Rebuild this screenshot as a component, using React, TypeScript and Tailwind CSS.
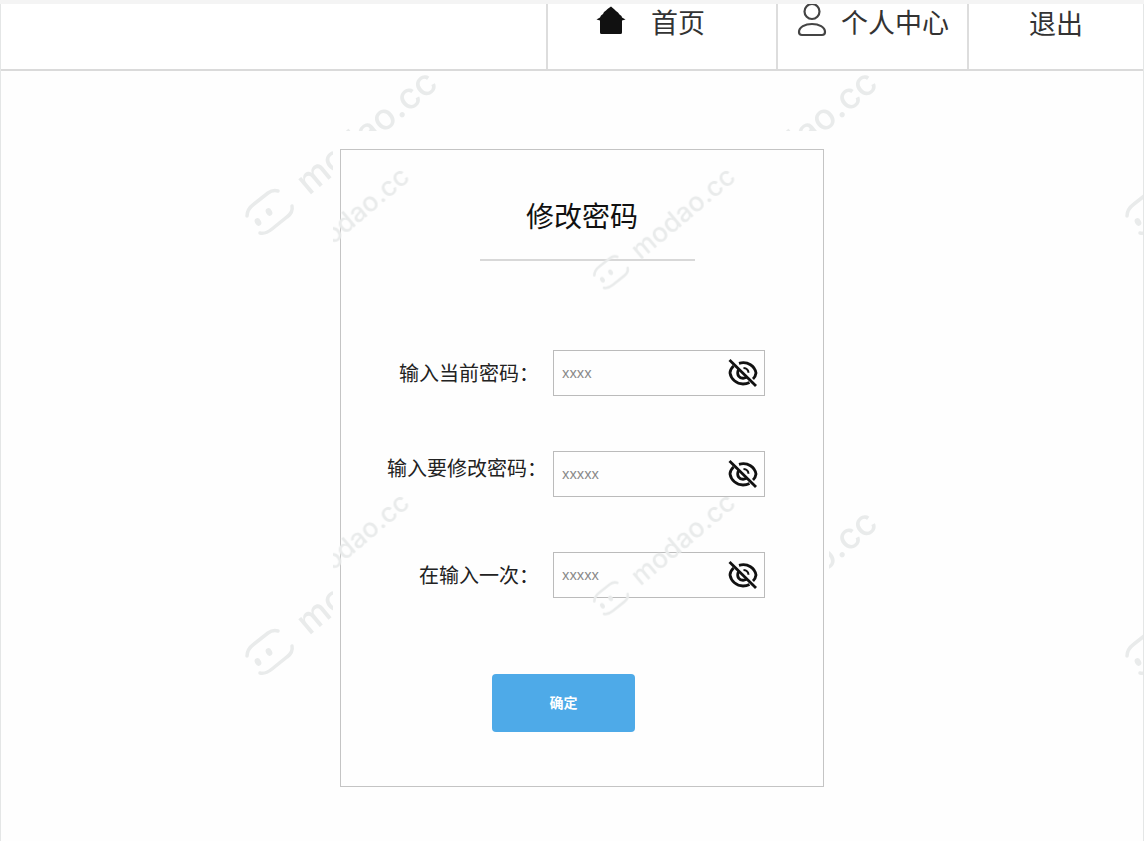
import React, { useState } from 'react'

interface PasswordField {
  id: string
  label: string
  placeholder: string
  /** Alignment of the label inside its row */
  labelClass: string
}

const fields: PasswordField[] = [
  { id: 'current', label: '输入当前密码：', placeholder: 'xxxx', labelClass: 'pr-3.5 leading-[48px]' },
  { id: 'next', label: '输入要修改密码：', placeholder: 'xxxxx', labelClass: 'pr-1.5 leading-9' },
  { id: 'repeat', label: '在输入一次：', placeholder: 'xxxxx', labelClass: 'pr-3.5 leading-[48px]' },
]

const HomeIcon = () => (
  <svg width="30" height="32" viewBox="0 0 30 32" fill="#111111" aria-hidden="true">
    <path d="M15 2.500 L18.500 5.500 L20 7 L22 8.500 L23.500 10.500 L25.500 12 L26 13.500 L29.500 15.500 L26 16.500 L26 28.500 Q26 30 24.500 30 L5.500 30 Q4 30 4 28.500 L4 16.500 L0.500 15.500 L4 13.500 L5 11.500 L7 10 L8 8 L10 6.500 L11.500 5 Z" />
  </svg>
)

const UserIcon = () => (
  <svg width="30" height="34" viewBox="0 0 30 34" fill="none" stroke="#444444" strokeWidth="2.200" aria-hidden="true">
    <circle cx="15" cy="7.500" r="7.500" />
    <path d="M15 20 C8 20 2 23 2 28 Q2 31 5 31 L25 31 Q28 31 28 28 C28 23 22 20 15 20 Z" />
  </svg>
)

const EyeOffIcon = () => (
  <svg width="30" height="30" viewBox="0 0 30 30" fill="none" stroke="#111111" strokeWidth="2.800" aria-hidden="true">
    <path d="M5.500 8 C3 10.500 2 13 2 15 C3 21 8.500 26 15 26 C17.500 26 19.500 25.500 21.500 24.500" />
    <path d="M11 5.300 C20 2.700 27 8.500 28 15 C27.700 17.500 26.500 19.500 25 21" />
    <path d="M10.500 11.500 C8 17 11.500 20.700 16 20.200 C17.500 20 18.500 19.300 19 18.500" />
    <path d="M15.500 10 C18.300 10.200 20.300 12 20.500 14.800" strokeWidth="2" />
    <path d="M1.500 2 L28 28" />
  </svg>
)

interface WatermarkProps {
  id: string
  x: number
  y: number
  scale: number
}

/**
 * Tiled brand mark that covers its nearest positioned parent
 */
const Watermark: React.FC<WatermarkProps> = ({ id, x, y, scale }) => (
  <svg className="pointer-events-none absolute inset-0 h-full w-full" aria-hidden="true">
    <defs>
      <pattern
        id={id}
        width="440"
        height="440"
        patternUnits="userSpaceOnUse"
        patternTransform={`translate(${x} ${y}) scale(${scale})`}
      >
        <g fill="none" stroke="#e9ebeb" strokeWidth="3.500" strokeLinecap="round">
          <path d="M22 161 C22 156 25 152 29 149 L43 138 C47 135 50 135 53 136" />
          <path d="M67 151 C68 156 66 159 62 162 L47 174 C42 178 39 179 35 178" />
        </g>
        <g fill="#e9ebeb">
          <ellipse cx="33" cy="167" rx="3" ry="4" transform="rotate(-30 33 167)" />
          <ellipse cx="44" cy="157" rx="3" ry="4" transform="rotate(-30 44 157)" />
          <text
            className="font-['Inter',sans-serif] text-[36px] font-medium"
            transform="translate(84 141) rotate(-40)"
          >
            modao.cc
          </text>
        </g>
      </pattern>
    </defs>
    <rect width="100%" height="100%" fill={`url(#${id})`} />
  </svg>
)

const Header = () => (
  <header className="relative flex h-[67px] border-b-2 border-[#dadada] bg-white text-[27px] leading-[38px] text-[#333333]">
    <div className="flex-1" />
    <a href="#home" className="flex w-[230px] items-start gap-[25px] border-l-2 border-[#dddddd] pl-12">
      <HomeIcon />
      首页
    </a>
    <a href="#profile" className="flex w-[191px] items-start gap-3.5 border-l-2 border-[#dddddd] pl-[19px]">
      <UserIcon />
      个人中心
    </a>
    <a href="#logout" className="w-[176px] border-l-2 border-[#dddddd] text-center leading-10">
      退出
    </a>
  </header>
)

const PasswordRow: React.FC<{ field: PasswordField }> = ({ field }) => {
  const [value, setValue] = useState('')
  const [visible, setVisible] = useState(false)

  return (
    <div className="flex h-[46px] items-start">
      <label
        htmlFor={field.id}
        className={`w-[212px] shrink-0 text-right text-xl whitespace-nowrap text-[#222222] ${field.labelClass}`}
      >
        {field.label}
      </label>
      <div className="flex h-[46px] w-[212px] items-center border border-[#bbbbbb] pr-1.5 pl-2">
        <input
          id={field.id}
          type={visible ? 'text' : 'password'}
          value={value}
          onChange={(e) => setValue(e.target.value)}
          placeholder={field.placeholder}
          className="min-w-0 flex-1 text-sm outline-none placeholder:text-[#888888]"
        />
        <button type="button" aria-label="显示密码" onClick={() => setVisible(!visible)}>
          <EyeOffIcon />
        </button>
      </div>
    </div>
  )
}

export default function App() {
  return (
    <div className="min-h-screen border-t-4 border-[#f4f4f4] bg-[#fefefe] font-['Noto_Sans','Noto_Sans_CJK_SC',sans-serif]">
      <div className="relative min-h-[calc(100vh-4px)] overflow-hidden border-x border-[#e4e6e6]">
        <Watermark id="page-mark" x={224} y={51} scale={1} />
        <Header />
        <main className="flex justify-center pt-[60px] pl-[18px]">
          <div className="relative overflow-hidden bg-[#fefefe] pt-[18px] pr-[5px] pb-3 pl-[7px]">
            <form
              className="w-[484px] max-w-full border border-[#c4c4c4] pt-[46px] pb-[54px]"
              onSubmit={(e) => e.preventDefault()}
            >
              <h1 className="text-center text-[28px] leading-10 text-[#111111]">修改密码</h1>
              <hr className="mt-[23px] ml-[139px] w-[215px] border-t-2 border-[#d8d8d8]" />
              <div className="mt-[89px] flex flex-col gap-[55px]">
                {fields.map(field => (
                  <PasswordRow key={field.id} field={field} />
                ))}
              </div>
              <button
                type="submit"
                className="mt-[76px] ml-[151px] block h-[58px] w-[143px] rounded bg-[#4eaae8] text-sm font-bold text-white"
              >
                确定
              </button>
            </form>
            <Watermark id="form-mark" x={245} y={25} scale={0.741} />
          </div>
        </main>
      </div>
    </div>
  )
}
